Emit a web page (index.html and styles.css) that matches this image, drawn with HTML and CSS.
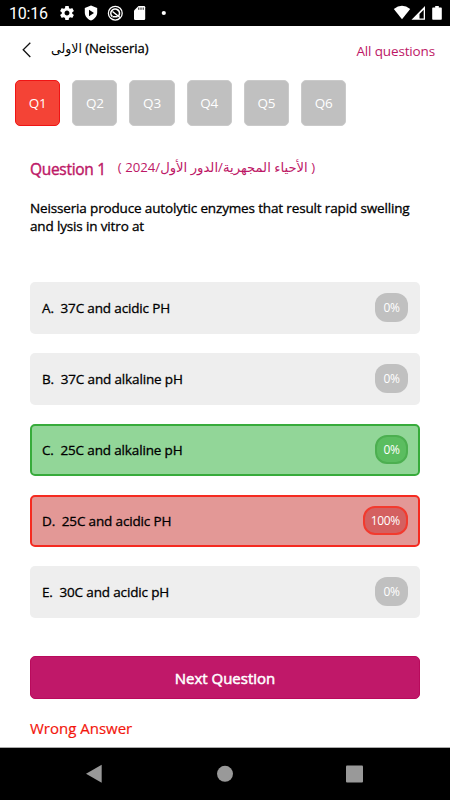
FILE: index.html
```html
<!DOCTYPE html>
<html lang="en">
<head>
<meta charset="utf-8">
<title>Quiz</title>
<link rel="stylesheet" href="styles.css">
</head>
<body>
<div class="status">
  <span class="clock">10:16</span>
  <svg class="status-left" width="110" height="26" viewBox="0 0 110 26">
    <g fill="#fff">
      <path transform="translate(-.4 4.600) scale(.7)" d="M19.43 12.98c.04-.32.07-.64.07-.98s-.03-.66-.07-.98l2.11-1.65c.19-.15.24-.42.12-.64l-2-3.46c-.12-.22-.39-.3-.61-.22l-2.49 1c-.52-.4-1.08-.73-1.69-.98l-.38-2.65C14.46 2.18 14.25 2 14 2h-4c-.25 0-.46.18-.49.42l-.38 2.65c-.61.25-1.17.59-1.69.98l-2.49-1c-.23-.09-.49 0-.61.22l-2 3.460c-.13.22-.07.49.12.64l2.110 1.650c-.04.32-.07.65-.07.98s.03.66.07.98l-2.110 1.650c-.19.15-.24.42-.12.64l2 3.460c.12.22.39.3.61.22l2.490-1c.52.4 1.080.73 1.690.98l.38 2.650c.03.24.24.42.49.42h4c.25 0 .46-.18.49-.42l.38-2.650c.61-.25 1.170-.59 1.690-.98l2.490 1c.23.09.49 0 .61-.22l2-3.460c.12-.22.07-.49-.12-.64l-2.110-1.650zM12 15.500c-1.930 0-3.500-1.570-3.500-3.500s1.570-3.500 3.500-3.500 3.500 1.570 3.500 3.500-1.570 3.500-3.500 3.500z"/>
      <path fill-rule="evenodd" d="M32 5.500 38.200 8v4.500c0 3.700-2.500 6.500-6.200 8-3.700-1.500-6.200-4.300-6.200-8V8zM30 9.700v6.600l5-3.300z"/>
      <path d="M79.500 6H85q1.200 0 1.200 1.200V18.800q0 1.200-1.200 1.200H76.200q-1.200 0-1.200-1.200V10.500z"/>
      <circle cx="104.800" cy="13" r="2.100"/>
    </g>
    <g fill="none" stroke="#fff">
      <circle cx="56.300" cy="13.200" r="6.900" stroke-width="1.300"/>
      <path d="M53.300 16.500A4.300 4.300 0 1 1 59.500 16" stroke-width="1.700"/>
      <path d="M53.500 11.500 61 17.500M53.500 16.700h5" stroke-width="1.500"/>
    </g>
    <path d="M79.800 7.500v2.300M82 7.500v2.300M84.200 7.500v2.300" stroke="#000" stroke-width=".9"/>
  </svg>
  <svg class="status-right" width="52" height="26" viewBox="0 0 52 26">
    <path fill="#fff" d="M.8 9Q9 2.500 17.200 9L9 19.300z"/>
    <path fill="#fff" fill-rule="evenodd" d="M18.500 19.800 32 6v13.800zM26.500 14v4.400h4.200V9.700z"/>
    <path fill="#fff" d="M40 7.500h2.200V6h3.600v1.500H48q.8 0 .8.800V19q0 .8-.8.800h-8q-.8 0-.8-.8V8.300q0-.8.800-.8z"/>
  </svg>
</div>
<header class="bar">
  <svg class="back" width="10" height="16" viewBox="0 0 10 16"><path d="M8.300.7 1.200 7.700l7.100 7.300" fill="none" stroke="#111" stroke-width="1.300"/></svg>
  <h1 class="title"><span class="title-ar" lang="ar">الاولى</span> <span class="title-en">(Neisseria)</span></h1>
  <a class="all">All questions</a>
</header>
<nav class="tabs">
  <span class="tab active">Q1</span><span class="tab">Q2</span><span class="tab">Q3</span><span class="tab">Q4</span><span class="tab">Q5</span><span class="tab">Q6</span>
</nav>
<main class="content">
  <div class="heading">
    <h2 class="number">Question 1</h2>
    <span class="source" dir="rtl" lang="ar">( الأحياء المجهرية/الدور الأول/2024 )</span>
  </div>
  <p class="question">Neisseria produce autolytic enzymes that result rapid swelling<br>and lysis in vitro at</p>
  <div class="options">
    <div class="option"><span class="label">A.&nbsp; 37C and acidic PH</span><span class="pct">0%</span></div>
    <div class="option"><span class="label">B.&nbsp; 37C and alkaline pH</span><span class="pct">0%</span></div>
    <div class="option right"><span class="label">C.&nbsp; 25C and alkaline pH</span><span class="pct">0%</span></div>
    <div class="option wrong"><span class="label">D.&nbsp; 25C and acidic PH</span><span class="pct">100%</span></div>
    <div class="option"><span class="label">E.&nbsp; 30C and acidic pH</span><span class="pct">0%</span></div>
  </div>
  <div class="next"><span>Next Question</span></div>
  <p class="result">Wrong Answer</p>
</main>
<footer class="navbar">
  <svg width="450" height="53" viewBox="0 0 450 53"><g fill="#999"><path d="M86 25.800 101.700 16.800v18z"/><circle cx="225" cy="25.800" r="8"/><rect x="346" y="17.500" width="17" height="17" rx="1"/></g></svg>
</footer>
</body>
</html>
```
FILE: styles.css
```css
* { box-sizing: border-box; margin: 0; padding: 0; }
body {
  width: 450px; height: 800px; overflow: hidden;
  display: flex; flex-direction: column;
  background: #fff; color: #000;
  font-family: "Open Sans", "DejaVu Sans", sans-serif;
}
.status { height: 26px; background: #000; color: #fff; display: flex; align-items: center; flex: none; }
.clock { font: 16px/26px Roboto, sans-serif; width: 50px; margin-left: 9px; padding-top: 2px; letter-spacing: -.2px; }
.status-right { margin-left: auto; margin-right: 5px; }
.bar { height: 47px; display: flex; align-items: center; flex: none; padding: 0 15px 0 22px; }
.title { font-size: 13px; font-weight: 400; line-height: 20px; margin-left: 19px; margin-top: -2px; -webkit-text-stroke: .3px #000; white-space: nowrap; }
.title-ar { font-size: 12.500px; -webkit-text-stroke: 0; }
.title-en { letter-spacing: -.02px; }
.all { margin-left: auto; margin-top: 2px; font-size: 13.500px; letter-spacing: -.15px; color: #bd1766; }
.tabs { display: flex; gap: 11.900px; padding: 7px 15px 0; height: 53px; flex: none; }
.tab { width: 45.300px; height: 46px; border-radius: 5px; border: 1px solid #cacaca; background: #c0c0c0; color: #fff; font-size: 13.500px; letter-spacing: -.2px; display: flex; align-items: center; justify-content: center; }
.tab.active { background: #f44336; border-color: #f01414; }
.content { padding: 30px 30px 0; flex: 1; }
.heading { display: flex; gap: 12px; height: 26px; color: #bd1766; white-space: nowrap; }
.number { font-size: 15.500px; font-weight: 400; line-height: 26px; letter-spacing: -.3px; -webkit-text-stroke: .4px #bd1766; }
.source { font-size: 13.200px; line-height: 22px; }
.question { margin-top: 17px; font-size: 13.500px; line-height: 18px; letter-spacing: -.15px; -webkit-text-stroke: .3px #000; white-space: nowrap; }
.options { margin-top: 46px; padding-top: .5px; display: grid; gap: 18.500px; }
.option { height: 52.500px; border-radius: 5px; background: #eee; padding: 0 12px; display: flex; align-items: center; justify-content: space-between; font-size: 13.500px; }
.label { letter-spacing: -.15px; -webkit-text-stroke: .3px #000; white-space: nowrap; }
.pct { height: 29px; min-width: 33px; padding: 0 8px; border-radius: 12px; background: #c0c0c0; color: #fff; font-size: 12px; letter-spacing: -.3px; display: flex; align-items: center; justify-content: center; }
.right { background: #92d698; border: 2px solid #37ab3b; padding: 0 10px; }
.right .pct { background: #5bbd60; border: 2px solid #4caf50; padding: 0 6px; }
.wrong { background: #e39896; border: 2px solid #f52a20; padding: 0 10px; }
.wrong .pct { background: #d46060; border: 2px solid #f23a2e; padding: 0 6px; }
.next { margin-top: 38px; height: 43px; border-radius: 5px; border: 1px solid #b90a5c; background: #c01869; color: #fff; font-size: 15px; display: flex; align-items: center; justify-content: center; }
.next span { -webkit-text-stroke: .5px #fff; }
.result { margin-top: 18px; font-size: 15px; line-height: 22px; color: #f3160c; -webkit-text-stroke: .2px #f3160c; }
.navbar { height: 53px; background: #000; border-top: 1px solid #aaa; flex: none; }
```
